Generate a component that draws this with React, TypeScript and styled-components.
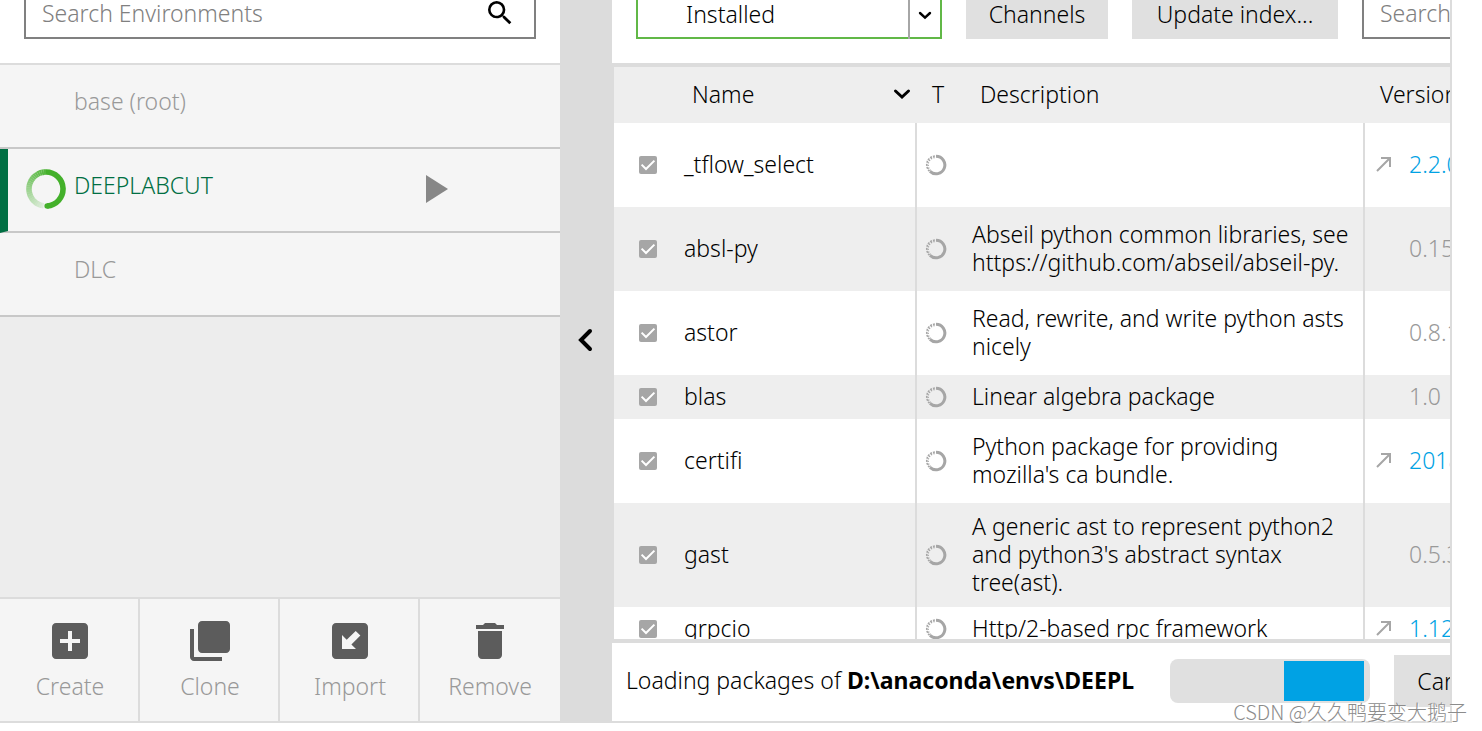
import React from "react";
import styled, { createGlobalStyle, css } from "styled-components";

const color = {
  line: "#dcdcdc",
  panel: "#ededed",
  item: "#f5f5f5",
  button: "#e0e0e0",
  muted: "#999999",
  field: "#808080",
  icon: "#5c5c5c",
  check: "#a6a6a6",
  brand: "#006f43",
  spinner: "#43b02a",
  focus: "#61b847",
  link: "#00a2e4",
};

const GlobalStyle = createGlobalStyle`
  *, *::before, *::after { box-sizing: border-box; }
  body {
    margin: 0;
    background: #fff;
    color: #000;
    overflow: hidden;
  }
  body, button, input, select {
    font-family: "Noto Sans", "Open Sans", sans-serif;
    font-size: 23px;
    font-weight: 300;
    line-height: 28px;
  }
  button, input, select { border: 0; border-radius: 0; margin: 0; }
`;

const Page = styled.div`
  height: 100vh;
  padding: 0 30px 8px 0;
`;

const Window = styled.div`
  display: flex;
  height: 100%;
  overflow: hidden;
  border-right: 2px solid ${color.line};
  border-bottom: 2px solid ${color.line};
`;

const Sidebar = styled.aside`
  flex: 0 0 560px;
  display: flex;
  flex-direction: column;
  background: ${color.panel};
`;

const SidebarHeader = styled.div`
  height: 65px;
  padding: 0 24px 24px;
  background: #fff;
  border-bottom: 2px solid ${color.line};
`;

const SearchBox = styled.label<{ $wide?: boolean }>`
  display: flex;
  align-items: center;
  height: 39px;
  padding: 0 18px 12px 16px;
  background: #fff;
  border: solid ${color.field};
  border-width: 0 2px 2px;
  ${(p) => p.$wide && css`flex: 0 0 240px;`}
`;

const SearchInput = styled.input`
  flex: 1;
  min-width: 0;
  height: 28px;
  padding: 0;
  background: transparent;
  outline: 0;
  &::placeholder { color: ${color.field}; opacity: 1; }
`;

const EnvList = styled.div`
  flex: 1;
`;

const EnvRow = styled.button<{ $active?: boolean }>`
  display: grid;
  grid-template-columns: ${(p) => (p.$active ? 66 : 74)}px 1fr 136px;
  align-items: center;
  width: 100%;
  height: 84px;
  padding: 0;
  text-align: left;
  background: ${color.item};
  color: ${(p) => (p.$active ? color.brand : color.muted)};
  border-bottom: 2px solid #c8c8c8;
  ${(p) => p.$active && css`border-left: 8px solid ${color.brand};`}
`;

const EnvName = styled.span`
  padding-bottom: 10px;
`;

const SpinnerSlot = styled.span`
  display: flex;
  padding: 0 0 2px 18px;
`;

const PlaySlot = styled.span`
  display: flex;
  padding-bottom: 2px;
`;

const Actions = styled.div`
  display: grid;
  grid-template-columns: repeat(4, 1fr);
  border-top: 2px solid ${color.line};
`;

const ActionButton = styled.button`
  display: flex;
  flex-direction: column;
  align-items: center;
  gap: 7px;
  height: 122px;
  padding: 18px 0 0;
  background: ${color.item};
  color: ${color.muted};
  &:not(:last-child) {
    padding-left: 2px;
    border-right: 2px solid ${color.line};
  }
  svg { fill: ${color.icon}; }
`;

const Splitter = styled.button`
  flex: 0 0 52px;
  display: flex;
  align-items: center;
  justify-content: center;
  padding: 0 2px 42px 0;
  background: ${color.line};
`;

const Main = styled.main`
  flex: 1;
  min-width: 0;
  display: flex;
  flex-direction: column;
  overflow: hidden;
`;

const Toolbar = styled.div`
  display: flex;
  gap: 24px;
  height: 63px;
  padding: 0 0 24px 24px;
`;

const SelectBox = styled.label`
  flex: 0 0 306px;
  display: grid;
  grid-template-columns: 1fr 32px;
  border: solid ${color.focus};
  border-width: 0 2px 2px;
`;

const SelectInput = styled.select`
  grid-area: 1 / 1 / 2 / 3;
  appearance: none;
  padding: 0 30px 11px 48px;
  background: transparent;
  color: #000;
`;

const SelectArrow = styled.span`
  grid-area: 1 / 2 / 2 / 3;
  display: flex;
  align-items: center;
  justify-content: center;
  padding-bottom: 9px;
  border-left: 2px solid ${color.check};
  pointer-events: none;
`;

const ToolButton = styled.button<{ $width: number }>`
  flex: 0 0 ${(p) => p.$width}px;
  padding: 0 0 13px;
  white-space: nowrap;
  background: ${color.button};
  color: #000;
`;

const TableArea = styled.div`
  flex: 1;
  min-height: 0;
  overflow: hidden;
  border: solid ${color.line};
  border-width: 4px 0 4px 2px;
`;

const Table = styled.table`
  width: 100%;
  table-layout: fixed;
  border-collapse: separate;
  border-spacing: 0;
`;

const HeadCell = styled.th<{ $pad?: number }>`
  height: 56px;
  padding: 0 4px 2px ${(p) => p.$pad ?? 0}px;
  background: #eeeeee;
  font-weight: 300;
  text-align: left;
  white-space: nowrap;
  overflow: hidden;
`;

const SortHead = styled.span`
  display: flex;
  align-items: center;
  justify-content: space-between;
  padding-right: 2px;
`;

const Row = styled.tr<{ $height: number }>`
  height: ${(p) => p.$height}px;
  &:nth-child(even) { background: #eeeeee; }
`;

const Cell = styled.td<{ $pad?: number; $ruled?: boolean; $text?: boolean }>`
  padding: 0 0 ${(p) => (p.$text ? 2 : 0)}px ${(p) => p.$pad ?? 0}px;
  vertical-align: middle;
  white-space: pre;
  overflow: hidden;
  ${(p) => p.$ruled && css`border-right: 2px solid ${color.line};`}
`;

const Tick = styled.label`
  display: grid;
  width: 18px;
  height: 18px;
  > * { grid-area: 1 / 1; }
`;

const TickInput = styled.input`
  appearance: none;
  width: 18px;
  height: 18px;
  border-radius: 2px;
  background: ${color.check};
`;

const Centered = styled.span`
  display: flex;
  align-items: center;
`;

const Version = styled.span<{ $update?: boolean }>`
  display: grid;
  grid-template-columns: 33px 1fr;
  align-items: center;
  color: ${(p) => (p.$update ? color.link : color.muted)};
`;

const VersionText = styled.span`
  grid-column: 2;
`;

const StatusBar = styled.div`
  display: flex;
  align-items: center;
  gap: 24px;
  height: 78px;
  padding: 0 0 2px 14px;
`;

const StatusText = styled.p`
  flex: 0 0 520px;
  margin: 0;
  padding-bottom: 2px;
  white-space: nowrap;
  overflow: hidden;
`;

const StatusPath = styled.strong`
  font-weight: 700;
`;

const Progress = styled.div`
  flex: 0 0 200px;
  display: flex;
  justify-content: flex-end;
  height: 44px;
  padding: 2px 6px 2px 0;
  border-radius: 8px;
  background: ${color.button};
`;

const ProgressChunk = styled.div`
  width: 80px;
  background: ${color.link};
`;

const CancelButton = styled.button`
  flex: 0 0 116px;
  height: 52px;
  padding: 0;
  background: ${color.button};
  color: #000;
`;

const Watermark = styled.div`
  position: absolute;
  right: 15px;
  bottom: 5px;
  font: 300 20px/28px "Noto Sans CJK SC", sans-serif;
  color: #8c8c8c;
  text-shadow: 1px 1px 0 rgba(255, 255, 255, 0.8);
`;

const BusyRing = () => {
  const steps = 24;
  const point = (deg: number) => {
    const a = (deg * Math.PI) / 180;
    return `${(20 + 17 * Math.cos(a)).toFixed(2)} ${(20 + 17 * Math.sin(a)).toFixed(2)}`;
  };
  const step = 172 / steps;
  return (
    <svg width="40" height="40" viewBox="0 0 40 40" fill="none" stroke={color.spinner} strokeWidth="5.6">
      {Array.from({ length: steps }, (_, i) => {
        const from = -90 - i * step;
        const opacity = 0.92 - (i / steps) * 0.82;
        return <path key={i} d={`M${point(from)}A17 17 0 0 0 ${point(from - step)}`} opacity={opacity} />;
      })}
      <path d={`M${point(86)}A17 17 0 0 0 ${point(-90)}`} />
      <circle cx="21.2" cy="37" r="2.8" fill={color.spinner} stroke="none" />
    </svg>
  );
};

const MiniRing = () => (
  <svg width="22" height="22" viewBox="0 0 22 22" fill="none" stroke={color.check}>
    <path d="M11 2.2A8.800 8.800 0 1 1 5 17.400" strokeWidth="3" />
    <path d="M5 17.400A8.800 8.800 0 0 1 11 2.200" strokeWidth="1.600" strokeDasharray="2 1" transform="translate(-.5 -.2)" />
    <path d="M5.600 16.600A7.600 7.600 0 0 1 11 3.400" strokeWidth="1.400" strokeDasharray="1.200 1.400" />
  </svg>
);

const Chevron = ({ w, h, d, stroke }: { w: number; h: number; d: string; stroke: number }) => (
  <svg width={w} height={h} viewBox={`0 0 ${w} ${h}`} fill="none" stroke="#000" strokeWidth={stroke} strokeLinecap="round">
    <path d={d} />
  </svg>
);

const NorthEast = () => (
  <svg width="16" height="16" viewBox="0 0 16 16" fill="none" stroke={color.check} strokeWidth="2">
    <path d="M1 15L14 2M5 2H14V11" />
  </svg>
);

const actions = [
  { label: "Create", d: "M19 3H5c-1.1 0-2 .9-2 2v14c0 1.1.9 2 2 2h14c1.1 0 2-.9 2-2V5c0-1.1-.9-2-2-2zm-2 10h-4v4h-2v-4H7v-2h4V7h2v4h4v2z" },
  { label: "Clone", d: "M4 6H2v14c0 1.1.9 2 2 2h14v-2H4V6zm16-4H8c-1.1 0-2 .9-2 2v12c0 1.1.9 2 2 2h12c1.1 0 2-.9 2-2V4c0-1.1-.9-2-2-2z" },
  { label: "Import", d: "M19 3H5c-1.1 0-2 .9-2 2v14c0 1.1.9 2 2 2h14c1.1 0 2-.9 2-2V5c0-1.1-.9-2-2-2zM8 9V16H15L12.7 13.8L17.2 9.3L14.85 7L10.35 11.4Z" },
  { label: "Remove", d: "M6 19c0 1.1.9 2 2 2h8c1.1 0 2-.9 2-2V7H6v12zM19 4h-3.5l-1-1h-5l-1 1H5v2h14V4z" },
];

const envs = [
  { name: "base (root)" },
  { name: "DEEPLABCUT", active: true },
  { name: "DLC" },
];

const packages = [
  { name: "_tflow_select", text: "", version: "2.2.0", update: true, height: 84 },
  { name: "absl-py", text: "Abseil python common libraries, see\nhttps://github.com/abseil/abseil-py.", version: "0.15.0", height: 84 },
  { name: "astor", text: "Read, rewrite, and write python asts\nnicely", version: "0.8.1", height: 84 },
  { name: "blas", text: "Linear algebra package", version: "1.0", height: 44 },
  { name: "certifi", text: "Python package for providing\nmozilla's ca bundle.", version: "2018.8.24", update: true, height: 84 },
  { name: "gast", text: "A generic ast to represent python2\nand python3's abstract syntax\ntree(ast).", version: "0.5.3", height: 104 },
  { name: "grpcio", text: "Http/2-based rpc framework", version: "1.12.1", update: true, height: 44 },
];

export default function App() {
  return (
    <Page>
      <GlobalStyle />
      <Window>
        <Sidebar>
          <SidebarHeader>
            <SearchBox>
              <SearchInput type="text" placeholder="Search Environments" aria-label="Search Environments" />
              <svg width="32" height="32" viewBox="0 0 24 24">
                <path d="M15.5 14h-.79l-.28-.27A6.47 6.47 0 0 0 16 9.5 6.5 6.5 0 1 0 9.5 16c1.61 0 3.09-.59 4.23-1.57l.27.28v.79l5 4.99L20.49 19l-4.99-5zm-6 0C7.01 14 5 11.99 5 9.5S7.01 5 9.5 5 14 7.01 14 9.5 11.99 14 9.5 14z" />
              </svg>
            </SearchBox>
          </SidebarHeader>
          <EnvList>
            {envs.map((env) => (
              <EnvRow key={env.name} type="button" $active={env.active}>
                <SpinnerSlot>{env.active && <BusyRing />}</SpinnerSlot>
                <EnvName>{env.name}</EnvName>
                {env.active && (
                  <PlaySlot>
                    <svg width="24" height="28" viewBox="0 0 24 28">
                      <path d="M2 0L24 14L2 28Z" fill="#878787" />
                    </svg>
                  </PlaySlot>
                )}
              </EnvRow>
            ))}
          </EnvList>
          <Actions>
            {actions.map((action) => (
              <ActionButton key={action.label} type="button">
                <svg width="48" height="48" viewBox="0 0 24 24">
                  <path d={action.d} fillRule="evenodd" />
                </svg>
                {action.label}
              </ActionButton>
            ))}
          </Actions>
        </Sidebar>
        <Splitter type="button" aria-label="Collapse sidebar">
          <Chevron w={18} h={26} d="M14 4L5 13L14 22" stroke={4} />
        </Splitter>
        <Main>
          <Toolbar>
            <SelectBox>
              <SelectInput aria-label="Package filter" defaultValue="Installed">
                <option>Installed</option>
              </SelectInput>
              <SelectArrow>
                <Chevron w={14} h={10} d="M2 3L7 7.6L12 3" stroke={2.4} />
              </SelectArrow>
            </SelectBox>
            <ToolButton type="button" $width={142}>Channels</ToolButton>
            <ToolButton type="button" $width={206}>Update index...</ToolButton>
            <SearchBox $wide>
              <SearchInput type="text" placeholder="Search Packages" aria-label="Search Packages" />
            </SearchBox>
          </Toolbar>
          <TableArea>
            <Table>
              <colgroup>
                <col style={{ width: 62 }} />
                <col style={{ width: 241 }} />
                <col style={{ width: 48 }} />
                <col />
                <col style={{ width: 85 }} />
              </colgroup>
              <thead>
                <tr>
                  <HeadCell aria-label="Selected" />
                  <HeadCell $pad={16}>
                    <SortHead>
                      Name
                      <Chevron w={18} h={12} d="M2.5 3L9 9L15.500 3" stroke={3} />
                    </SortHead>
                  </HeadCell>
                  <HeadCell $pad={15}>T</HeadCell>
                  <HeadCell $pad={15}>Description</HeadCell>
                  <HeadCell $pad={15}>Version</HeadCell>
                </tr>
              </thead>
              <tbody>
                {packages.map((pkg) => (
                  <Row key={pkg.name} $height={pkg.height}>
                    <Cell $pad={25}>
                      <Tick>
                        <TickInput type="checkbox" defaultChecked aria-label={pkg.name} />
                        <svg width="18" height="18" viewBox="0 0 18 18" fill="none" stroke="#fff" strokeWidth="2">
                          <path d="M2.600 8.600L7 13L15.400 4.600" />
                        </svg>
                      </Tick>
                    </Cell>
                    <Cell $pad={8} $ruled $text>{pkg.name}</Cell>
                    <Cell $pad={8}>
                      <Centered><MiniRing /></Centered>
                    </Cell>
                    <Cell $pad={7} $ruled $text>{pkg.text}</Cell>
                    <Cell $pad={11} $text>
                      <Version $update={pkg.update}>
                        {pkg.update && <NorthEast />}
                        <VersionText>{pkg.version}</VersionText>
                      </Version>
                    </Cell>
                  </Row>
                ))}
              </tbody>
            </Table>
          </TableArea>
          <StatusBar>
            <StatusText>
              Loading packages of <StatusPath>{"D:\\anaconda\\envs\\DEEPL"}</StatusPath>
            </StatusText>
            <Progress role="progressbar" aria-label="Loading packages">
              <ProgressChunk />
            </Progress>
            <CancelButton type="button">Cancel</CancelButton>
          </StatusBar>
        </Main>
      </Window>
      <Watermark>CSDN @久久鸭要变大鹅子</Watermark>
    </Page>
  );
}
